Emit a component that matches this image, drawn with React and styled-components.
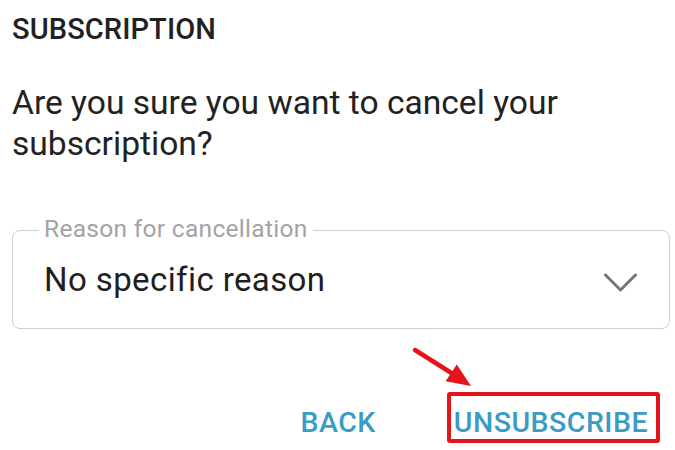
import React from "react";
import styled, { createGlobalStyle } from "styled-components";

const GlobalStyle = createGlobalStyle`
  html, body {
    margin: 0;
    padding: 0;
    background: #ffffff;
  }
  body {
    font-family: Roboto, "Noto Sans", "Liberation Sans", sans-serif;
    -webkit-font-smoothing: antialiased;
  }
`;

const Page = styled.div`
  position: relative;
  width: 675px;
  height: 450px;
  box-sizing: border-box;
  padding: 12px 5px 0 12px;
  overflow: hidden;
  background: #ffffff;
`;

const Title = styled.h2`
  margin: 0;
  font-size: 29px;
  line-height: 34px;
  font-weight: 500;
  color: #212121;
  letter-spacing: 0.1px;
`;

const Question = styled.p`
  margin: 36px 0 0;
  font-size: 33.6px;
  line-height: 41px;
  font-weight: 400;
  color: #222222;
`;

const Field = styled.div`
  position: relative;
  margin-top: 66px;
  height: 99px;
  box-sizing: border-box;
  border: 1.5px solid #cfcfcf;
  border-radius: 8px;
  display: flex;
  align-items: center;
  justify-content: space-between;
  padding: 0 32px 0 31px;
`;

const FieldLabel = styled.span`
  position: absolute;
  top: -14px;
  left: 26px;
  padding: 0 5px;
  background: #ffffff;
  font-size: 24.5px;
  line-height: 24px;
  letter-spacing: 0.3px;
  color: #a3a3a3;
`;

const FieldValue = styled.span`
  font-size: 33px;
  line-height: 40px;
  letter-spacing: 0.4px;
  color: #1f1f1f;
`;

const Chevron = styled.svg`
  display: block;
  margin-top: 6px;
`;

const Actions = styled.div`
  display: flex;
  justify-content: flex-end;
  align-items: flex-end;
  gap: 59px;
  margin-top: 63px;
  padding-right: 10px;
`;

const Button = styled.button`
  appearance: none;
  background: transparent;
  font-family: inherit;
  font-size: 28.5px;
  font-weight: 500;
  line-height: 33px;
  letter-spacing: 0.5px;
  color: #3a9cc4;
  text-transform: uppercase;
  padding: 10px 8px 0 3px;
  border: 4px solid ${(p) => (p.$highlight ? "#e3141b" : "transparent")};
  border-radius: 3px;
  cursor: pointer;
`;

const Arrow = styled.svg`
  position: absolute;
  left: 405px;
  top: 340px;
`;

const App = () => {
  return (
    <>
      <GlobalStyle />
      <Page>
        <Title>SUBSCRIPTION</Title>
        <Question>
          Are you sure you want to cancel your
          <br />
          subscription?
        </Question>
        <Field>
          <FieldLabel>Reason for cancellation</FieldLabel>
          <FieldValue>No specific reason</FieldValue>
          <Chevron width="33" height="20" viewBox="0 0 33 20">
            <polyline
              points="1.5,2 16.5,17 31.5,2"
              fill="none"
              stroke="#767676"
              strokeWidth="3"
              strokeLinecap="round"
              strokeLinejoin="round"
            />
          </Chevron>
        </Field>
        <Actions>
          <Button>Back</Button>
          <Button $highlight>Unsubscribe</Button>
        </Actions>
        <Arrow width="80" height="55" viewBox="0 0 80 55">
          <line
            x1="10"
            y1="10"
            x2="48"
            y2="34"
            stroke="#e3141b"
            strokeWidth="4.5"
            strokeLinecap="round"
          />
          <polygon points="66,46 40.6,41.3 51.8,24.6" fill="#e3141b" />
        </Arrow>
      </Page>
    </>
  );
};

export default App;
